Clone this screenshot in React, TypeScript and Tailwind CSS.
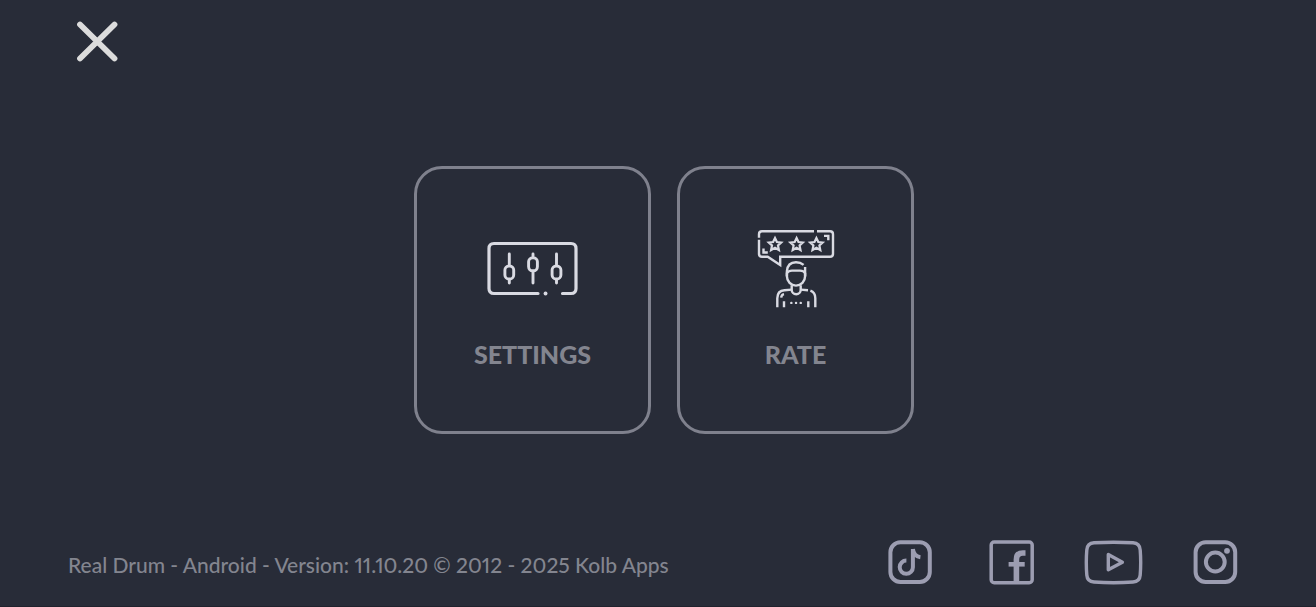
import type { ReactNode } from "react";

const STAR = "M0 -6.4 L1.9 -2.4 L6.2 -1.9 L3 1 L3.9 5.6 L0 3.3 L-3.9 5.6 L-3 1 L-6.2 -1.9 L-1.9 -2.4 Z";

function CloseIcon() {
  return (
    <svg width="44" height="44" viewBox="0 0 44 44" fill="none" stroke="currentColor" strokeWidth="5.8" strokeLinecap="round" aria-hidden="true">
      <path d="M5 4.5 L39.5 38.5 M39.5 4.5 L5 38.5" />
    </svg>
  );
}

function MixerIcon() {
  return (
    <svg width="94" height="56" viewBox="0 0 94 56" fill="none" stroke="currentColor" strokeWidth="3.2" strokeLinecap="round" aria-hidden="true">
      <path d="M52 53.5 H8 Q3 53.5 3 48.5 V8.5 Q3 3.5 8 3.5 H85 Q90 3.5 90 8.5 V48.5 Q90 53.5 85 53.5 H76.5" />
      <path d="M59.5 53.5 h.1" strokeWidth="3.8" />
      <g strokeWidth="2.9">
        <path d="M23.3 14 V24.5 M23.3 40 V43" />
        <rect x="18.9" y="26" width="8.8" height="13" rx="4" />
        <path d="M47 14 V16 M47 31.5 V43" />
        <rect x="42.6" y="17.8" width="8.8" height="13" rx="4" />
        <path d="M70.5 14 V24.5 M70.5 40 V43" />
        <rect x="66.1" y="26" width="8.8" height="13" rx="4" />
      </g>
    </svg>
  );
}

function ReviewIcon() {
  return (
    <svg width="82" height="82" viewBox="0 -1.2 82 82" fill="none" stroke="currentColor" strokeWidth="2.4" aria-hidden="true">
      <path d="M4 11.5 V25.6 Q4 28.6 7 28.6 H12.7 L25.2 36.8 V28.6 H75 Q78 28.6 78 25.6 V6 Q78 3 75 3 H62" />
      <path d="M59 3 H7 Q4 3 4 6 V9.5" />
      <path d="M8.5 20.2 V24.3 H12.8 M69 7.7 H73.3 V12" />
      <g strokeWidth="2.2">
        <path d={STAR} transform="translate(20 16.2)" />
        <path d={STAR} transform="translate(41.6 16.2)" />
        <path d={STAR} transform="translate(61.4 16.2)" />
      </g>
      <path d="M31.9 48 V43 Q32.6 34 41 34 Q45.5 34 48.6 36.6 M50.1 38.8 V48" />
      <path d="M31.9 45 Q33.5 42.4 37 42.4 H45 Q48.7 42.4 50.1 45 V48 A9.1 9.4 0 0 1 31.9 48 Z" />
      <path d="M36.7 57 V61.5 A4.5 4.5 0 0 0 45.7 61.5 V57" />
      <path d="M22.3 79 V70 Q22.3 62.5 29.5 62 L36.7 61.4 M45.7 61.4 L53 62 M55.4 62.5 Q60.3 64.3 60.3 70 V79" />
      <path d="M29 73 V79 M53.3 73 V79 M26.2 69.5 Q26.4 66.5 29 65.9" />
      <path d="M36.3 74.7 h.1 M41 74.7 h.1 M45.7 74.7 h.1" strokeWidth="2.4" strokeLinecap="round" />
    </svg>
  );
}

function TikTokIcon() {
  return (
    <svg width="44" height="45" viewBox="0 0 44 45" fill="none" stroke="currentColor" strokeWidth="4" aria-hidden="true">
      <rect x="2.4" y="2.3" width="39.4" height="39.6" rx="10" />
      <path d="M24.9 9 V27.2 A6.6 6.6 0 1 1 18.4 20.6 M24.9 9 C25.4 13.5 27.9 16.6 32.4 17.2" />
    </svg>
  );
}

function FacebookIcon() {
  return (
    <svg width="45" height="45" viewBox="0 0 45 45" fill="none" stroke="currentColor" aria-hidden="true">
      <rect x="2.2" y="2.1" width="41" height="40.6" rx="3" strokeWidth="3.5" />
      <path d="M27.4 43 V19.5 Q27.4 13 33.9 13 H36.5" strokeWidth="5.6" />
      <path d="M19.6 24.3 H35.7" strokeWidth="4.6" />
    </svg>
  );
}

function YouTubeIcon() {
  return (
    <svg width="59" height="45" viewBox="0 0 59 45" fill="none" stroke="currentColor" strokeWidth="3.4" strokeLinejoin="round" aria-hidden="true">
      <path d="M10 2.8 Q29.5 1.6 49 2.8 Q55.7 3.2 56.2 10 Q57.2 22.4 56.2 35 Q55.7 41.6 49 42 Q29.5 43.4 10 42 Q3.3 41.6 2.8 35 Q1.8 22.4 2.8 10 Q3.3 3.2 10 2.8 Z" />
      <path d="M24.3 14.4 L38.4 22.2 L24.3 29.8 Z" />
    </svg>
  );
}

function InstagramIcon() {
  return (
    <svg width="45" height="45" viewBox="0 0 45 45" fill="none" stroke="currentColor" strokeWidth="4" aria-hidden="true">
      <rect x="2.6" y="2.3" width="39.6" height="39.6" rx="10" />
      <circle cx="22.3" cy="22" r="9.4" />
      <circle cx="34" cy="10.8" r="2.9" fill="currentColor" stroke="none" />
    </svg>
  );
}

function MenuCard({ label, children }: { label: string; children: ReactNode }) {
  return (
    <button
      type="button"
      className="flex h-[268px] w-[237px] flex-col items-center rounded-[28px] border-[3px] border-[#7f818d] pt-[49px] text-[25px] leading-8 font-black text-[#83858f]"
    >
      <span className="mb-5 flex h-[100px] items-center justify-center text-[#d9dae2]">{children}</span>
      {label}
    </button>
  );
}

export default function App() {
  return (
    <div className="flex min-h-screen flex-col border-b border-[#20222d] bg-[#282c38] font-['Lato',sans-serif]">
      <header className="flex h-15 items-start pt-5 pl-[75px]">
        <button type="button" aria-label="Close" className="text-[#dcdcdc]">
          <CloseIcon />
        </button>
      </header>
      <main className="flex flex-1 items-center justify-center gap-[26px] pl-3">
        <MenuCard label="SETTINGS">
          <MixerIcon />
        </MenuCard>
        <MenuCard label="RATE">
          <ReviewIcon />
        </MenuCard>
      </main>
      <footer className="flex items-center justify-between pr-[78px] pb-[21px] pl-[68px]">
        <p className="pt-1 text-[21px] leading-8 font-medium text-[#83858f] proportional-nums">
          Real Drum - Android - Version: 11.10.20 © 2012 - 2025 Kolb Apps
        </p>
        <nav aria-label="Social media" className="flex items-center gap-[50px] text-[#9c9db1]">
          <a href="#tiktok" aria-label="TikTok" className="mr-[7px]"><TikTokIcon /></a>
          <a href="#facebook" aria-label="Facebook"><FacebookIcon /></a>
          <a href="#youtube" aria-label="YouTube"><YouTubeIcon /></a>
          <a href="#instagram" aria-label="Instagram"><InstagramIcon /></a>
        </nav>
      </footer>
    </div>
  );
}
